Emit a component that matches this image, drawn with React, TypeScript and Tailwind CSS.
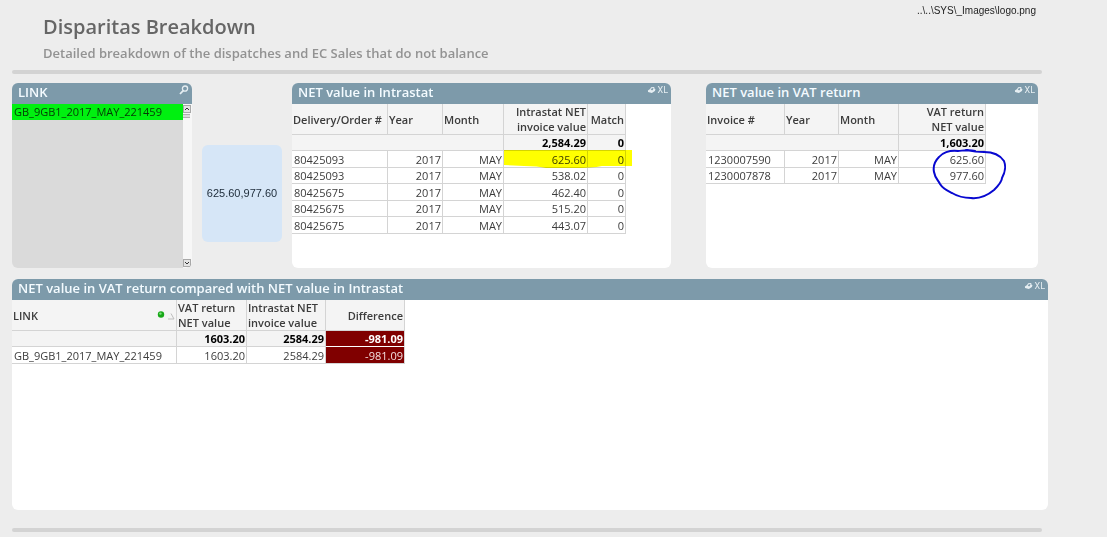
import React, { useState } from 'react';

type Column = {
  label: string;
  width: string;
  align?: 'left' | 'right';
  headAlign?: 'left' | 'right';
  marker?: boolean;
  alert?: boolean;
};

type DataTableProps = {
  label: string;
  columns: Column[];
  totals: string[];
  rows: string[][];
};

const intrastatColumns: Column[] = [
  { label: 'Delivery/Order #', width: 'w-[96px]' },
  { label: 'Year', width: 'w-[55px]', align: 'right', headAlign: 'left' },
  { label: 'Month', width: 'w-[61px]', align: 'right', headAlign: 'left' },
  { label: 'Intrastat NET\ninvoice value', width: 'w-[84px]', align: 'right' },
  { label: 'Match', width: 'w-[38px]', align: 'right' },
];

const intrastatRows = [
  ['80425093', '2017', 'MAY', '625.60', '0'],
  ['80425093', '2017', 'MAY', '538.02', '0'],
  ['80425675', '2017', 'MAY', '462.40', '0'],
  ['80425675', '2017', 'MAY', '515.20', '0'],
  ['80425675', '2017', 'MAY', '443.07', '0'],
];

const vatColumns: Column[] = [
  { label: 'Invoice #', width: 'w-[79px]' },
  { label: 'Year', width: 'w-[54px]', align: 'right', headAlign: 'left' },
  { label: 'Month', width: 'w-[60px]', align: 'right', headAlign: 'left' },
  { label: 'VAT return\nNET value', width: 'w-[87px]', align: 'right' },
];

const vatRows = [
  ['1230007590', '2017', 'MAY', '625.60'],
  ['1230007878', '2017', 'MAY', '977.60'],
];

const compareColumns: Column[] = [
  { label: 'LINK', width: 'w-[165px]', marker: true },
  { label: 'VAT return\nNET value', width: 'w-[70px]', align: 'right', headAlign: 'left' },
  { label: 'Intrastat NET\ninvoice value', width: 'w-[79px]', align: 'right', headAlign: 'left' },
  { label: 'Difference', width: 'w-[79px]', align: 'right', alert: true },
];

const compareRows = [['GB_9GB1_2017_MAY_221459', '1603.20', '2584.29', '-981.09']];

const links = ['GB_9GB1_2017_MAY_221459'];

const SearchIcon = () => (
  <svg viewBox="0 0 10 10" className="w-[10px] h-[10px]" fill="none" stroke="#e6eef2">
    <circle cx="6" cy="3.6" r="2.6" strokeWidth="1.3" />
    <path d="M4.2 5.6 L1 9" strokeWidth="1.8" />
  </svg>
);

const PrintIcon = () => (
  <svg viewBox="0 0 10 8" className="w-[9px] h-[8px]">
    <path d="M1 4.6 L3.4 2.8 L4.6 0.9 L8 0.6 L8.2 2.4 L9.4 3.2 L8.8 5.2 L5.4 7.4 L1.2 6.2 Z" fill="#e6eef2" />
    <path d="M4.2 4 L5.2 2 L7.2 1.8 L6.4 4.2 Z" fill="#7d9aaa" />
  </svg>
);

const ExportTools = () => (
  <div className="flex items-center gap-[2px] h-[13px]">
    <button type="button" aria-label="Print">
      <PrintIcon />
    </button>
    <button type="button" aria-label="Send to Excel" className="font-['Roboto',sans-serif] text-[9px] leading-[12px] text-[#e6eef2]">
      XL
    </button>
  </div>
);

const Panel = ({
  title,
  tools,
  className,
  children,
}: {
  title: string;
  tools: React.ReactNode;
  className: string;
  children: React.ReactNode;
}) => (
  <section className={`flex flex-col overflow-hidden rounded-md ${className}`}>
    <header className="flex justify-between items-start h-[21px] pl-[6px] pr-[3px] bg-[#7d9aaa]">
      <h2 className="text-[13px] leading-[19px] font-semibold text-[#f4fbff] whitespace-nowrap">{title}</h2>
      {tools}
    </header>
    {children}
  </section>
);

const DataTable = ({ label, columns, totals, rows }: DataTableProps) => (
  <table aria-label={label} className="table-fixed w-0 border-separate border-spacing-0 text-[11px] leading-[15px] text-[#3c3c3c]">
    <thead>
      <tr className="h-[31px] bg-[#f4f4f4]">
        {columns.map((col) => (
          <th
            key={col.label}
            scope="col"
            className={`${col.width} p-0 px-px border-r border-b border-[#d4d4d4] font-semibold whitespace-pre-line ${
              (col.headAlign ?? col.align) === 'right' ? 'text-right' : 'text-left'
            }`}
          >
            {col.marker ? (
              <span className="flex items-center justify-between">
                {col.label}
                <svg viewBox="0 0 18 10" className="w-[18px] h-[10px]">
                  <circle cx="4" cy="4.5" r="3.2" fill="#18a818" />
                  <circle cx="3.4" cy="3.6" r="1.2" fill="#7fe07f" />
                  <path d="M11 9 L17 9 L14 3.5" fill="none" stroke="#bdbdbd" />
                </svg>
              </span>
            ) : (
              col.label
            )}
          </th>
        ))}
      </tr>
    </thead>
    <tbody>
      <tr className="h-[16px] bg-[#f4f4f4] font-bold text-black">
        {columns.map((col, i) => (
          <td
            key={col.label}
            className={`p-0 px-px border-b text-right ${
              col.alert ? 'bg-[#800000] text-white border-white' : 'border-[#d4d4d4]'
            } ${totals[i] || totals[i + 1] ? 'border-r border-r-[#d4d4d4]' : ''}`}
          >
            {totals[i]}
          </td>
        ))}
      </tr>
      {rows.map((row, r) => (
        <tr key={r} className="odd:h-[16px] even:h-[17px]">
          {columns.map((col, i) => (
            <td
              key={col.label}
              className={`p-0 border-r border-b border-[#d4d4d4] ${
                col.align === 'right' ? 'pr-px text-right' : 'pl-[2px] text-left'
              } ${col.alert ? 'bg-[#800000] text-[#f3dede]' : ''}`}
            >
              {row[i]}
            </td>
          ))}
        </tr>
      ))}
    </tbody>
  </table>
);

const ScrollButton = ({ label, path }: { label: string; path: string }) => (
  <button type="button" aria-label={label} className="w-[8px] h-[8px] border border-[#a8a8a8] bg-[#e4e4e4]">
    <svg viewBox="0 0 6 6" className="w-[6px] h-[6px]">
      <path d={path} fill="none" stroke="#333" />
    </svg>
  </button>
);

const LinkList = () => {
  const [selected, setSelected] = useState(links[0]);

  return (
    <div className="flex flex-1 bg-[#dadada]">
      <ul className="flex-1">
        {links.map((link) => (
          <li key={link}>
            <button
              type="button"
              aria-pressed={selected === link}
              onClick={() => setSelected(link)}
              className={`block w-full h-[16px] px-[2px] text-left text-[11px] leading-[16px] ${
                selected === link ? 'bg-[#00f010] text-[#063806]' : 'text-[#444]'
              }`}
            >
              {link}
            </button>
          </li>
        ))}
      </ul>
      <div className="flex flex-col w-[9px] pt-px pb-px bg-[#f7f7f7]">
        <ScrollButton label="Scroll up" path="M1 4 L3 2 L5 4" />
        <div className="w-[7px] h-[4px] mt-px border-y border-[#b0b0b0] bg-[#dcdcdc]" />
        <div className="flex-1" />
        <ScrollButton label="Scroll down" path="M1 2 L3 4 L5 2" />
      </div>
    </div>
  );
};

const App = () => {
  return (
    <main className="min-h-screen pl-3 pr-[59px] bg-[#ededed] font-['Open_Sans','Noto_Sans',sans-serif]">
      <div className="flex justify-between h-[70px] pl-[31px] pr-3">
        <div className="pt-[14px]">
          <h1 className="text-[20px] leading-[26px] font-semibold text-[#666]">Disparitas Breakdown</h1>
          <p className="text-[13px] leading-[26px] font-semibold text-[#929292]">
            Detailed breakdown of the dispatches and EC Sales that do not balance
          </p>
        </div>
        <p className="pt-[4px] font-['Liberation_Sans',sans-serif] text-[10px] leading-[14px] text-[#222]">
          {'..\\..\\SYS\\_Images\\logo.png'}
        </p>
      </div>
      <hr className="h-[4px] mr-[6px] border-0 rounded-full bg-[#d3d3d3]" />

      <div className="flex mt-[9px] pr-[10px] h-[185px]">
        <Panel
          title="LINK"
          className="w-[180px] shrink-0"
          tools={
            <button type="button" aria-label="Search" className="pt-[2px]">
              <SearchIcon />
            </button>
          }
        >
          <LinkList />
        </Panel>

        <div className="flex items-center justify-center shrink-0 w-[80px] h-[97px] mt-[62px] mx-[10px] rounded-md bg-[#d6e6f7] font-['Liberation_Sans',sans-serif] text-[11px] text-[#1c2a38]">
          625.60,977.60
        </div>

        <div className="relative flex flex-[379]">
          <Panel title="NET value in Intrastat" className="flex-1 bg-white" tools={<ExportTools />}>
            <DataTable
              label="NET value in Intrastat"
              columns={intrastatColumns}
              totals={['', '', '', '2,584.29', '0']}
              rows={intrastatRows}
            />
          </Panel>
          {/* marker pen over the first row */}
          <svg
            viewBox="0 0 128 19"
            className="absolute left-[212px] top-[67px] w-[128px] h-[19px] mix-blend-multiply pointer-events-none"
          >
            <path d="M0 0 H128 V16 L98 16 Q88 18 70 18 L42 18 Q34 16 20 16 L0 15 Z" fill="#ffff00" />
          </svg>
        </div>

        <div className="relative flex flex-[332] ml-[35px]">
          <Panel title="NET value in VAT return" className="flex-1 bg-white" tools={<ExportTools />}>
            <DataTable
              label="NET value in VAT return"
              columns={vatColumns}
              totals={['', '', '', '1,603.20']}
              rows={vatRows}
            />
          </Panel>
          {/* pen circle round the two values */}
          <svg viewBox="0 0 76 52" className="absolute left-[225px] top-[65px] w-[76px] h-[52px] pointer-events-none">
            <path
              d="M44 3 C36 1 31 3 27 3 C18 2 11 5 8 9 C4 13 2 19 3 24 C4 30 7 32 9 36 C12 41 17 43 21 45 C26 48 33 50 40 50 C49 51 57 47 63 42 C67 38 71 34 71 30 C74 25 75 18 73 13 C69 7 61 4 53 4 C46 4 40 3 35 2"
              fill="none"
              stroke="#0808d0"
              strokeWidth="2"
              strokeLinecap="round"
            />
          </svg>
        </div>
      </div>

      <Panel
        title="NET value in VAT return compared with NET value in Intrastat"
        className="mt-[11px] h-[231px] bg-white"
        tools={<ExportTools />}
      >
        <DataTable
          label="NET value in VAT return compared with NET value in Intrastat"
          columns={compareColumns}
          totals={['', '1603.20', '2584.29', '-981.09']}
          rows={compareRows}
        />
      </Panel>

      <hr className="h-[4px] mt-[18px] mr-[6px] border-0 rounded-full bg-[#d3d3d3]" />
    </main>
  );
};

export default App;
